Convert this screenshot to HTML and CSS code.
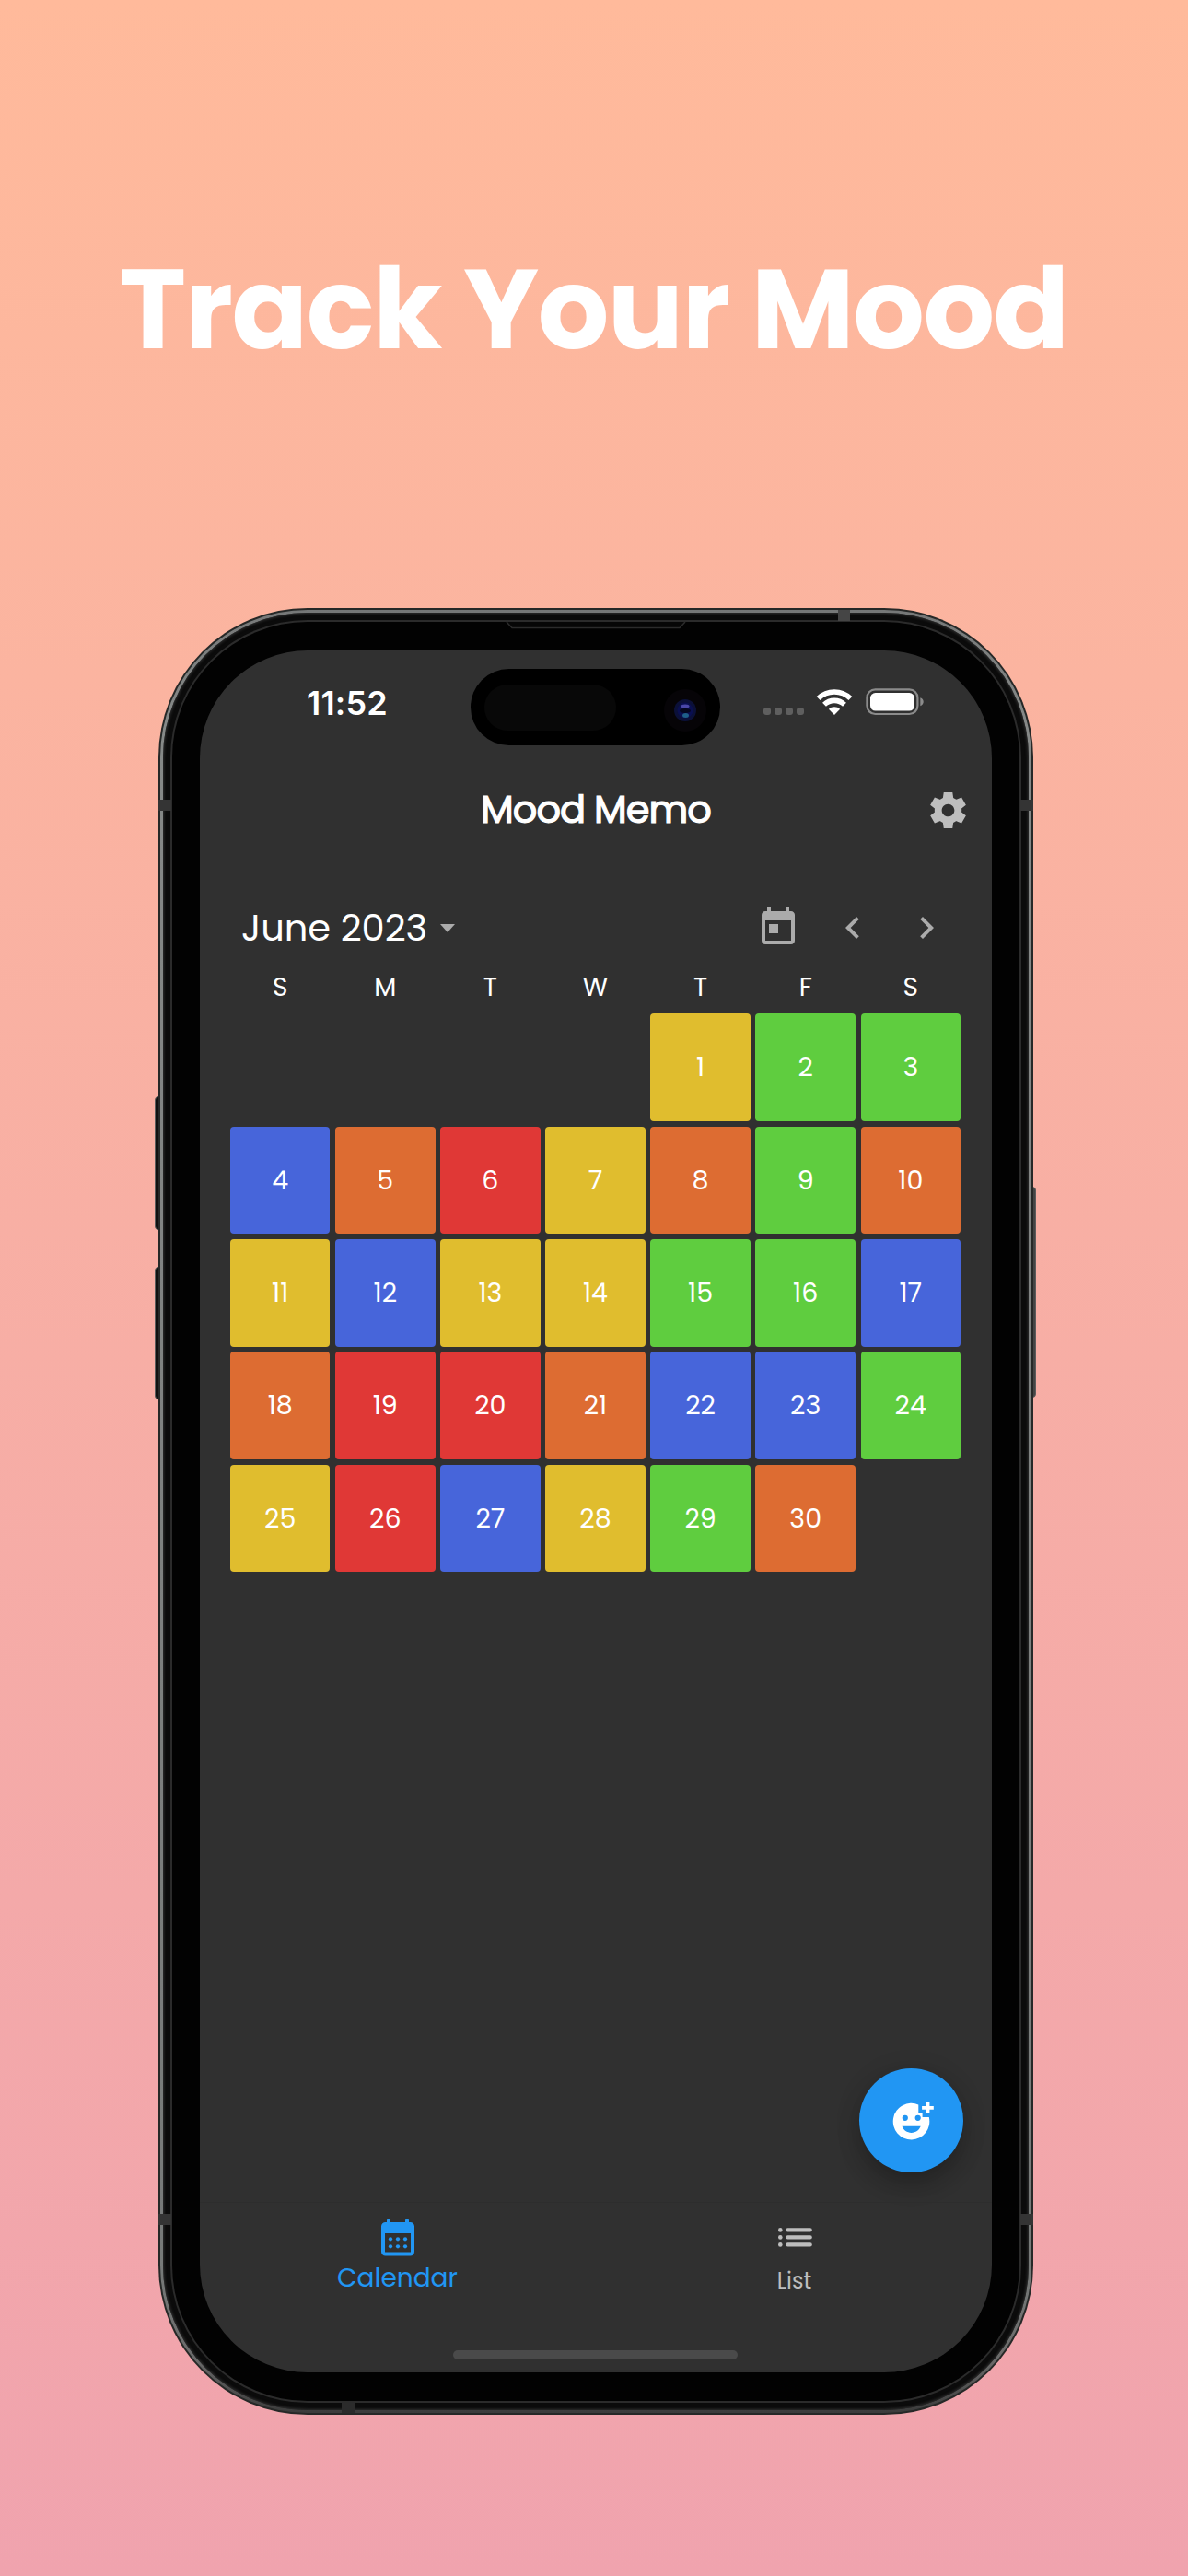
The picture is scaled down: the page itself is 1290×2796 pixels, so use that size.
FILE: index.html
```html
<!DOCTYPE html>
<html lang="en">
<head>
<meta charset="utf-8">
<title>Mood Memo</title>
<link rel="stylesheet" href="styles.css">
</head>
<body>
<h1 class="headline">Track Your Mood</h1>
<div class="phone">
  <i class="side-button volume-up"></i>
  <i class="side-button volume-down"></i>
  <i class="side-button power"></i>
  <div class="edge"><div class="steel"><div class="rim"><div class="seam"><div class="bezel">
    <main class="screen">
      <header class="status">
        <span class="time">11:52</span>
        <div class="island">
          <i class="sensor"></i>
          <svg class="camera" width="46" height="46" viewBox="0 0 46 46">
            <circle cx="23" cy="23" r="23" fill="#060407"/>
            <circle cx="23" cy="23" r="12" fill="#0b1038"/>
            <circle cx="23" cy="23" r="8.500" fill="#0a0f50"/>
            <ellipse cx="23" cy="18.500" rx="4.500" ry="2" fill="#4a47a8"/>
            <ellipse cx="23" cy="23.500" rx="6" ry="2.400" fill="#05071f"/>
            <ellipse cx="23.500" cy="28.500" rx="3.500" ry="2.500" fill="#1e5f88"/>
          </svg>
        </div>
        <div class="indicators">
          <div class="signal"><i></i><i></i><i></i><i></i></div>
          <svg class="wifi" width="40" height="30" viewBox="0 0 40 30">
            <g fill="none" stroke="#fff" stroke-width="5.600">
              <path d="M2.600 11.100A25 25 0 0 1 37.400 11.100"/>
              <path d="M9 17.800A15.800 15.800 0 0 1 31 17.800"/>
            </g>
            <path d="M20 29l-6.100-6.200a8.800 8.800 0 0 1 12.200 0z" fill="#fff"/>
          </svg>
          <svg class="battery" width="64" height="30" viewBox="0 0 64 30">
            <rect x="1.400" y="1.400" width="55" height="26.600" rx="9" fill="none" stroke="#8b8b8b" stroke-width="2.200"/>
            <rect x="5" y="5" width="48" height="19.600" rx="5.600" fill="#fff"/>
            <path d="M59.300 10.200c2.200.8 3.400 2.600 3.400 4.500s-1.200 3.700-3.400 4.500z" fill="#8b8b8b"/>
          </svg>
        </div>
      </header>
      <div class="appbar">
        <h2 class="title">Mood Memo</h2>
        <svg class="gear" width="47" height="47" viewBox="0 0 24 24"><path fill="#bebebe" d="M19.440 12.990l-.01.020c.04-.330.080-.670.080-1.010 0-.340-.030-.660-.070-.990l.01.020 2.440-1.920-2.430-4.220-2.870 1.160.010.010c-.520-.400-1.090-.740-1.710-1h.010L14.440 2H9.570l-.440 3.070h.010c-.620.260-1.190.600-1.710 1l.010-.010-2.880-1.170-2.440 4.220 2.440 1.920.010-.020c-.040.330-.070.650-.070.990 0 .340.030.680.080 1.010l-.010-.020-2.100 1.650-.330.260 2.430 4.200 2.880-1.150-.020-.040c.530.410 1.100.750 1.730 1.010h-.030L9.580 22h4.850s.030-.180.060-.420l.380-2.650h-.010c.620-.260 1.200-.600 1.730-1.010l-.020.040 2.880 1.150 2.430-4.200s-.140-.120-.330-.260l-2.110-1.660zM12 15.500c-1.930 0-3.500-1.570-3.500-3.500s1.570-3.500 3.500-3.500 3.500 1.570 3.500 3.500-1.570 3.500-3.500 3.500z"/></svg>
      </div>
      <section class="calendar">
        <div class="month-bar">
          <span class="month">June 2023</span>
          <svg class="caret" width="16" height="9" viewBox="0 0 16 9"><path d="M0 0h16L8 9z" fill="#ababab"/></svg>
          <div class="tools">
            <svg width="48" height="48" viewBox="0 0 24 24"><path d="M19 3h-1V1h-2v2H8V1H6v2H5c-1.110 0-1.990.9-1.990 2L3 19c0 1.100.89 2 2 2h14c1.100 0 2-.9 2-2V5c0-1.100-.9-2-2-2zm0 16H5V8h14v11zM7 10h5v5H7z"/></svg>
            <svg width="48" height="48" viewBox="0 0 24 24"><path d="M15.410 7.410L14 6l-6 6 6 6 1.410-1.410L10.830 12z"/></svg>
            <svg width="48" height="48" viewBox="0 0 24 24"><path d="M10 6L8.590 7.410 13.170 12l-4.580 4.590L10 18l6-6z"/></svg>
          </div>
        </div>
        <div class="weekdays"><span>S</span><span>M</span><span>T</span><span>W</span><span>T</span><span>F</span><span>S</span></div>
        <div class="days">
          <span class="day yellow first">1</span><span class="day green">2</span><span class="day green">3</span>
          <span class="day blue">4</span><span class="day orange">5</span><span class="day red">6</span><span class="day yellow">7</span><span class="day orange">8</span><span class="day green">9</span><span class="day orange">10</span>
          <span class="day yellow">11</span><span class="day blue">12</span><span class="day yellow">13</span><span class="day yellow">14</span><span class="day green">15</span><span class="day green">16</span><span class="day blue">17</span>
          <span class="day orange">18</span><span class="day red">19</span><span class="day red">20</span><span class="day orange">21</span><span class="day blue">22</span><span class="day blue">23</span><span class="day green">24</span>
          <span class="day yellow">25</span><span class="day red">26</span><span class="day blue">27</span><span class="day yellow">28</span><span class="day green">29</span><span class="day orange">30</span>
        </div>
      </section>
      <div class="fab">
        <svg width="48" height="48" viewBox="0 0 48 48">
          <path fill="#fff" fill-rule="evenodd" d="M31.300 6.400A19.800 19.800 0 1 0 42.800 20H35.600V16H31.300zM16.800 17.700a3.100 3.100 0 1 1 0 6.200 3.100 3.100 0 0 1 0-6.200zM30.700 17.700a3.100 3.100 0 1 1 0 6.200 3.100 3.100 0 0 1 0-6.200zM13.500 29.800h20.200c-1.600 4.300-5.400 7.100-10.100 7.100s-8.500-2.800-10.100-7.100z"/>
          <path fill="#fff" d="M39.500 3.500h3.900v4.400h4.400v3.900h-4.400v4h-3.900v-4h-4.400V7.900h4.400z"/>
        </svg>
      </div>
      <nav class="nav">
        <a class="tab active">
          <svg width="48" height="48" viewBox="0 0 48 48">
            <path fill="#2196f3" fill-rule="evenodd" d="M12 7V6a2 2 0 0 1 4 0v2h16V6a2 2 0 0 1 4 0v2h1.500A4.500 4.500 0 0 1 42 12.500V40a4.500 4.500 0 0 1-4.500 4.500h-27A4.500 4.500 0 0 1 6 40V12.500A4.500 4.500 0 0 1 10.500 8H12zM10 20v20.500h28V20z"/>
            <g fill="#2196f3"><circle cx="16" cy="26.300" r="2.100"/><circle cx="24" cy="26.300" r="2.100"/><circle cx="32" cy="26.300" r="2.100"/><circle cx="16" cy="34.300" r="2.100"/><circle cx="24" cy="34.300" r="2.100"/><circle cx="32" cy="34.300" r="2.100"/></g>
          </svg>
          <span class="label">Calendar</span>
        </a>
        <a class="tab">
          <svg width="48" height="48" viewBox="0 0 48 48" fill="#bebebe">
            <circle cx="8.300" cy="16.400" r="2.300"/><circle cx="8.300" cy="24.400" r="2.300"/><circle cx="8.300" cy="32.400" r="2.300"/>
            <rect x="14.300" y="14.200" width="28.500" height="4.400" rx="2"/><rect x="14.300" y="22.200" width="28.500" height="4.400" rx="2"/><rect x="14.300" y="30.200" width="28.500" height="4.400" rx="2"/>
          </svg>
          <span class="label">List</span>
        </a>
      </nav>
      <i class="home"></i>
    </main>
  </div></div></div></div></div>
  <svg class="speaker" width="196" height="10" viewBox="0 0 196 10"><path d="M1 1l6 6.500h182L195 1" fill="#060606" stroke="#2b2b2b" stroke-width="1.500"/></svg>
  <i class="band top"></i><i class="band bottom"></i>
  <i class="band left high"></i><i class="band right high"></i>
  <i class="band left low"></i><i class="band right low"></i>
</div>
</body>
</html>
```
FILE: styles.css
```css
* { box-sizing: border-box; }
body {
  margin: 0;
  width: 1290px;
  height: 2796px;
  overflow: hidden;
  display: flex;
  flex-direction: column;
  align-items: center;
  background: linear-gradient(#ffba9b, #f0a3ae);
  font-family: Poppins, Inter, "Noto Sans", sans-serif;
  color: #fff;
}
svg { display: block; flex: none; }
i { display: block; }

.headline {
  margin: 256px 0 0;
  height: 404px;
  font-size: 122px;
  font-weight: 700;
  line-height: 160px;
  letter-spacing: -1.500px;
  white-space: nowrap;
}

/* device */
.phone { position: relative; width: 950px; height: 1961px; margin-left: 4px; flex: none; }
.edge, .steel, .rim, .seam, .bezel { height: 100%; }
.edge { position: relative; padding: 2px; border-radius: 162px; background: #262827; }
.steel { padding: 3px; border-radius: 160px; background: linear-gradient(#767878, #868988 120px, #777a79 1800px, #6a6a6a 1900px, #3b3b3b); }
.rim { padding: 8px; border-radius: 157px; background: #0b0b0b; box-shadow: inset 0 0 3px 1px #303030; }
.seam { padding: 2px; border-radius: 149px; background: #2b2b2b; }
.bezel { padding: 31px 30px; border-radius: 147px; background: #020202; }
.screen {
  position: relative;
  height: 100%;
  display: flex;
  flex-direction: column;
  overflow: hidden;
  border-radius: 117px;
  background: #303030;
}
.side-button { position: absolute; width: 8px; border: 1.5px solid #5c5c5c; border-radius: 4px; background: #111; }
.volume-up { left: -4px; top: 530px; height: 145px; }
.volume-down { left: -4px; top: 715px; height: 144px; }
.power { right: -3px; top: 628px; height: 229px; background: #444; }
.speaker { position: absolute; left: 377px; top: 14px; }
.band { position: absolute; background: #343434; }
.band.left, .band.right { width: 14px; height: 12px; }
.band.left { left: 0; }
.band.right { right: 0; }
.band.high { top: 208px; }
.band.low { top: 1743px; }
.band.top { left: 738px; top: 2px; width: 13px; height: 12px; background: #454545; }
.band.bottom { left: 199px; bottom: 2px; width: 14px; height: 12px; background: #2b2b2b; }

/* status bar */
.status { height: 114px; flex: none; display: flex; align-items: center; padding: 0 73px 0 116px; }
.time { font-family: Inter, sans-serif; font-size: 36px; font-weight: 600; letter-spacing: 0.2px; }
.island {
  position: absolute;
  left: 294px;
  top: 20px;
  width: 271px;
  height: 83px;
  border-radius: 42px;
  background: #000;
  display: flex;
  align-items: center;
  justify-content: space-between;
  padding: 0 15px;
}
.sensor { width: 143px; height: 50px; border-radius: 25px; background: #080808; }
.camera { margin-top: 6px; }
.indicators { margin-left: auto; display: flex; align-items: center; }
.signal { display: flex; gap: 4px; margin: 17px 13px 0 0; }
.signal i { width: 8px; height: 8px; border-radius: 3px; background: #5f5f5f; }
.battery { margin-left: 14px; }
.wifi, .battery { margin-top: -2px; }

/* app bar */
.appbar { height: 118px; flex: none; display: grid; grid-template-columns: 1fr auto 1fr; align-items: center; padding: 0 24px; }
.title { grid-column: 2; margin: 0; font-size: 41.500px; line-height: 48px; font-weight: 400; letter-spacing: -1px; -webkit-text-stroke: 1.200px #fff; }
.gear { justify-self: end; }

/* calendar */
.calendar { padding: 32px 34px 0 33px; }
.month-bar { height: 74px; display: flex; align-items: center; padding-left: 12px; }
.month { font-size: 40px; letter-spacing: -0.050px; }
.caret { margin-left: 14px; }
.tools { display: flex; gap: 32.500px; margin: 0 13px 0 auto; fill: #ababab; }
.weekdays, .days { display: grid; grid-template-columns: repeat(7, 1fr); column-gap: 5.700px; text-align: center; }
.weekdays { height: 56.300px; align-items: center; font-size: 28px; }
.days { grid-auto-rows: 116.700px; row-gap: 5.700px; }
.day { display: flex; align-items: center; justify-content: center; border-radius: 4px; font-size: 28.500px; }
.first { grid-column: 5; }
.yellow { background: #e0bd2e; }
.green { background: #5fcd3f; }
.blue { background: #4765da; }
.orange { background: #dd6c32; }
.red { background: #e03836; }

/* floating button */
.fab {
  width: 113px;
  height: 113px;
  margin: auto 31px 32px auto;
  flex: none;
  display: flex;
  align-items: center;
  justify-content: center;
  border-radius: 50%;
  background: #2196f3;
  box-shadow: 0 14px 24px rgba(0, 0, 0, .2), 0 4px 30px rgba(0, 0, 0, .1);
}

/* bottom navigation */
.nav { height: 185px; flex: none; display: flex; border-top: 1px solid #2d2d2d; }
.tab { flex: 1; display: flex; flex-direction: column; align-items: center; padding-top: 13px; color: #bebebe; }
.tab.active { padding-right: 2px; }
.label { line-height: 40px; font-size: 24px; margin-top: 4px; }
.active .label { font-size: 28px; color: #2196f3; margin-top: 1px; }
.home { position: absolute; left: 275px; bottom: 14px; width: 309px; height: 10px; border-radius: 5px; background: #4a4a4a; }
```
